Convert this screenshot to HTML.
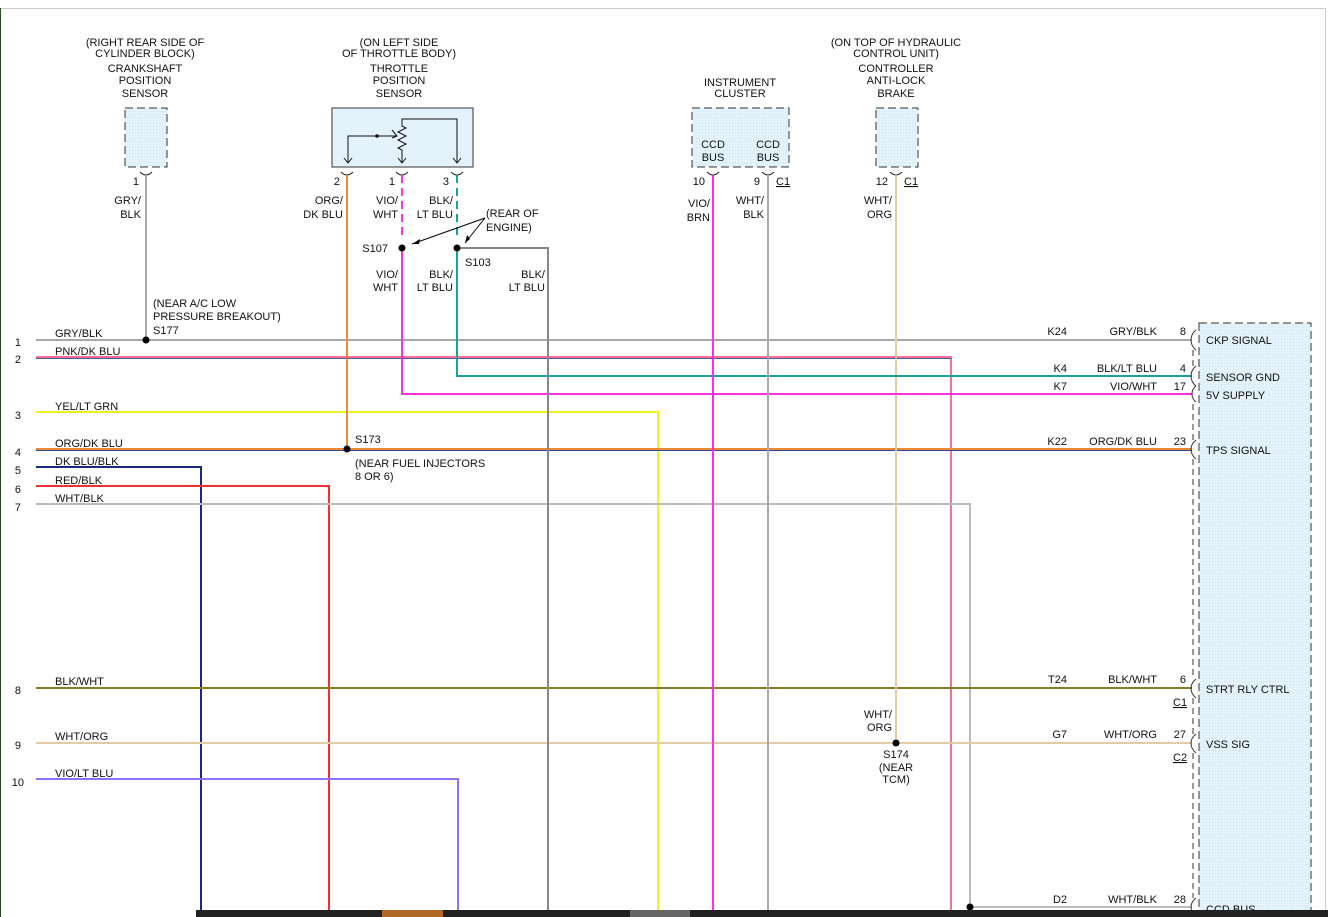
<!DOCTYPE html>
<html><head><meta charset="utf-8"><style>
html,body{margin:0;padding:0;background:#fff;}
svg{display:block;font-family:"Liberation Sans",Arial,sans-serif;font-size:11px;fill:#111;}
</style></head><body>
<svg width="1328" height="917" viewBox="0 0 1328 917" xmlns="http://www.w3.org/2000/svg">
<defs>
<pattern id="dots" width="3" height="3" patternUnits="userSpaceOnUse"><rect width="3" height="3" fill="#e4f3fb"/><rect width="1" height="1" fill="#cfe6f2"/></pattern>
</defs>
<rect x="0" y="8" width="1326" height="909" fill="#fff"/>
<line x1="0" y1="8.5" x2="1326" y2="8.5" stroke="#ccc"/>
<line x1="1325.5" y1="8" x2="1325.5" y2="917" stroke="#ccc"/>
<line x1="0.5" y1="8" x2="0.5" y2="917" stroke="#2a4a2a"/>

<!-- components -->
<rect x="125" y="108" width="42" height="59" fill="url(#dots)" stroke="#333" stroke-dasharray="8,4"/>
<rect x="332" y="108" width="141" height="59" fill="#e4f3fb" stroke="#333"/>
<rect x="692" y="108" width="97" height="59" fill="url(#dots)" stroke="#333" stroke-dasharray="8,4"/>
<rect x="876" y="108" width="42" height="59" fill="url(#dots)" stroke="#333" stroke-dasharray="8,4"/>
<rect x="1199" y="323" width="112" height="600" fill="url(#dots)" stroke="#333" stroke-dasharray="8,4"/>

<!-- TPS internals -->
<g fill="none" stroke="#111">
<path d="M348 163 V136 H397"/>
<path d="M402 163 V150 l-4 -2 8 -4 -8 -4 8 -4 -8 -4 8 -4 -4 -2 V119 H457 V163"/>
<path d="M392 130 l5 6 -5 2"/>
<path d="M344 158 l4 5 4 -5 M398 158 l4 5 4 -5 M453 158 l4 5 4 -5"/>
</g>
<circle cx="377" cy="136" r="1.8"/>

<!-- pin connectors -->
<g fill="none" stroke="#222">
<path d="M140 172 q6 6 12 0 M341 172 q6 6 12 0 M396 172 q6 6 12 0 M451 172 q6 6 12 0 M707 172 q6 6 12 0 M762 172 q6 6 12 0 M890 172 q6 6 12 0"/>
</g>

<!-- wires -->
<g fill="none" stroke-width="2">
<path d="M146 175 V340" stroke="#a8a8a8"/>
<path d="M36 340 H1192" stroke="#a8a8a8"/>
<path d="M36 357 H951 V917" stroke="#ff6aa0"/>
<path d="M36 358.5 H951" stroke="#4060a0" stroke-width="1"/>
<path d="M36 412 H658 V917" stroke="#f0f020"/>
<path d="M347 175 V449" stroke="#f08a30"/>
<path d="M36 449 H1192" stroke="#f08a30"/>
<path d="M36 450.5 H1192" stroke="#2a4aa0" stroke-width="1"/>
<path d="M36 467 H201 V917" stroke="#1a2a80"/>
<path d="M36 486 H329 V917" stroke="#f03030"/>
<path d="M36 504 H970 V907 H1192" stroke="#bbb"/>
<path d="M36 688 H1192" stroke="#8a7a20"/>
<path d="M896 175 V743" stroke="#e2cca8"/>
<path d="M36 743 H1192" stroke="#e2cca8"/>
<path d="M36 779 H458 V917" stroke="#9070ff"/>
<path d="M402 175 V240" stroke="#ff30e0" stroke-dasharray="8,5"/>
<path d="M402 248 V394 H1192" stroke="#ff30e0"/>
<path d="M457 175 V240" stroke="#1aa0a0" stroke-dasharray="8,5"/>
<path d="M457 248 V376 H1192" stroke="#1aa0a0"/>
<path d="M457 248 H548 V917" stroke="#888"/>
<path d="M713 175 V917" stroke="#ff30e0"/>
<path d="M768 175 V917" stroke="#aaa"/>
</g>

<!-- splice dots -->
<g fill="#000">
<circle cx="146" cy="340" r="3.5"/><circle cx="402" cy="248" r="3.5"/><circle cx="457" cy="248" r="3.5"/>
<circle cx="347" cy="449" r="3.5"/><circle cx="896" cy="743" r="3.5"/><circle cx="970" cy="907" r="3.5"/>
</g>
<g stroke="#000" fill="none"><path d="M485 218 L412 244 M485 218 L465 243"/></g>
<path d="M412 244 l8 -5 -1 5z M465 243 l2 -8 3 4z" fill="#000"/>

<!-- PCM connector symbols -->
<g fill="none" stroke="#333">
<path d="M1196 330 q-5 4 -5 10 q0 6 5 10 M1196 366 q-5 4 -5 10 q0 6 5 10 M1196 386 q-4 3 -4 8 q0 5 4 8 M1196 440 q-5 4 -5 9 q0 6 5 10 M1196 679 q-5 4 -5 9 q0 6 5 10 M1196 734 q-5 4 -5 9 q0 6 5 10 M1196 898 q-5 4 -5 9 q0 6 5 10"/>
<path d="M1193 350 V366 M1193 404 V440 M1193 459 V679 M1193 698 V734 M1193 753 V898" stroke-dasharray="6,4"/>
</g>

<!-- text -->
<g text-anchor="middle">
<text x="145" y="46">(RIGHT REAR SIDE OF</text><text x="145" y="57">CYLINDER BLOCK)</text>
<text x="145" y="72">CRANKSHAFT</text><text x="145" y="84">POSITION</text><text x="145" y="97">SENSOR</text>
<text x="399" y="46">(ON LEFT SIDE</text><text x="399" y="57">OF THROTTLE BODY)</text>
<text x="399" y="72">THROTTLE</text><text x="399" y="84">POSITION</text><text x="399" y="97">SENSOR</text>
<text x="740" y="86">INSTRUMENT</text><text x="740" y="97">CLUSTER</text>
<text x="896" y="46">(ON TOP OF HYDRAULIC</text><text x="896" y="57">CONTROL UNIT)</text>
<text x="896" y="72">CONTROLLER</text><text x="896" y="84">ANTI-LOCK</text><text x="896" y="97">BRAKE</text>
<text x="713" y="148">CCD</text><text x="713" y="161">BUS</text><text x="768" y="148">CCD</text><text x="768" y="161">BUS</text>
<text x="896" y="758">S174</text><text x="896" y="771">(NEAR</text><text x="896" y="783">TCM)</text>
</g>
<g text-anchor="end">
<text x="139" y="185">1</text><text x="141" y="204">GRY/</text><text x="141" y="218">BLK</text>
<text x="340" y="185">2</text><text x="343" y="204">ORG/</text><text x="343" y="218">DK BLU</text>
<text x="395" y="185">1</text><text x="398" y="204">VIO/</text><text x="398" y="218">WHT</text>
<text x="449" y="185">3</text><text x="453" y="204">BLK/</text><text x="453" y="218">LT BLU</text>
<text x="388" y="252">S107</text>
<text x="398" y="278">VIO/</text><text x="398" y="291">WHT</text>
<text x="453" y="278">BLK/</text><text x="453" y="291">LT BLU</text>
<text x="545" y="278">BLK/</text><text x="545" y="291">LT BLU</text>
<text x="705" y="185">10</text><text x="710" y="207">VIO/</text><text x="710" y="221">BRN</text>
<text x="760" y="185">9</text><text x="764" y="204">WHT/</text><text x="764" y="218">BLK</text>
<text x="888" y="185">12</text><text x="892" y="204">WHT/</text><text x="892" y="218">ORG</text>
<text x="892" y="718">WHT/</text><text x="892" y="731">ORG</text>
<g>
<text x="21" y="346">1</text><text x="21" y="363">2</text><text x="21" y="419">3</text><text x="21" y="456">4</text><text x="21" y="474">5</text><text x="21" y="493">6</text><text x="21" y="511">7</text><text x="21" y="694">8</text><text x="21" y="749">9</text><text x="24" y="786">10</text>
</g>
<text x="1067" y="335">K24</text><text x="1157" y="335">GRY/BLK</text><text x="1186" y="335">8</text>
<text x="1067" y="372">K4</text><text x="1157" y="372">BLK/LT BLU</text><text x="1186" y="372">4</text>
<text x="1067" y="390">K7</text><text x="1157" y="390">VIO/WHT</text><text x="1186" y="390">17</text>
<text x="1067" y="445">K22</text><text x="1157" y="445">ORG/DK BLU</text><text x="1186" y="445">23</text>
<text x="1067" y="683">T24</text><text x="1157" y="683">BLK/WHT</text><text x="1186" y="683">6</text>
<text x="1067" y="738">G7</text><text x="1157" y="738">WHT/ORG</text><text x="1186" y="738">27</text>
<text x="1067" y="903">D2</text><text x="1157" y="903">WHT/BLK</text><text x="1186" y="903">28</text>
</g>
<text x="776" y="185" text-decoration="underline">C1</text>
<text x="904" y="185" text-decoration="underline">C1</text>
<text x="1173" y="706" text-decoration="underline">C1</text>
<text x="1173" y="761" text-decoration="underline">C2</text>
<text x="486" y="217">(REAR OF</text><text x="486" y="231">ENGINE)</text>
<text x="465" y="266">S103</text>
<text x="153" y="307">(NEAR A/C LOW</text><text x="153" y="320">PRESSURE BREAKOUT)</text><text x="153" y="334">S177</text>
<text x="355" y="443">S173</text><text x="355" y="467">(NEAR FUEL INJECTORS</text><text x="355" y="480">8 OR 6)</text>
<text x="55" y="337">GRY/BLK</text><text x="55" y="355">PNK/DK BLU</text><text x="55" y="410">YEL/LT GRN</text><text x="55" y="447">ORG/DK BLU</text><text x="55" y="465">DK BLU/BLK</text><text x="55" y="484">RED/BLK</text><text x="55" y="502">WHT/BLK</text><text x="55" y="685">BLK/WHT</text><text x="55" y="740">WHT/ORG</text><text x="55" y="777">VIO/LT BLU</text>
<text x="1206" y="344">CKP SIGNAL</text><text x="1206" y="381">SENSOR GND</text><text x="1206" y="399">5V SUPPLY</text><text x="1206" y="454">TPS SIGNAL</text><text x="1206" y="693">STRT RLY CTRL</text><text x="1206" y="748">VSS SIG</text><text x="1206" y="913">CCD BUS</text>

<!-- bottom bar -->
<rect x="196" y="910" width="1132" height="7" fill="#222"/>
<rect x="382" y="910" width="61" height="7" fill="#b06a28"/>
<rect x="630" y="910" width="60" height="7" fill="#666"/>
</svg>
</body></html>
